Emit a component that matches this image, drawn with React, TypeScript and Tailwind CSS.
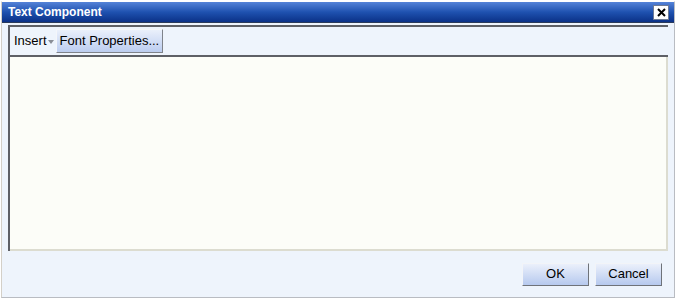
const App = () => {
  return (
    <div
      className="flex h-[299px] w-[676px] flex-col bg-white p-px"
      style={{ fontFamily: '"Liberation Sans", Arial, sans-serif' }}
    >
      <div className="flex flex-1 flex-col border border-[#b9bcc2] border-t-white border-l-[#d4d0c8]">
        {/* title bar */}
        <div className="flex h-[21px] items-center justify-between border-b border-[#2a3a5a] bg-gradient-to-b from-[#5583d8] via-[#1f52b0] to-[#0b3187] pl-[6px] pr-[5px]">
          <span className="text-[12px] font-bold text-white">Text Component</span>
          <button className="flex h-[15px] w-[16px] items-center justify-center border border-[#6d7a95] bg-white">
            <svg width="9" height="9" viewBox="0 0 9 9">
              <path d="M1 1L8 8M8 1L1 8" stroke="#000" strokeWidth="2" />
            </svg>
          </button>
        </div>

        {/* body */}
        <div className="flex flex-1 flex-col bg-[#eef4fc] px-[6px] pt-[2px]">
          <div className="flex flex-1 flex-col border-l-2 border-t-2 border-[#5e6066]">
            <div className="flex h-[30px] items-center gap-[2px] border-b-2 border-[#5e6066] bg-[#eef4fc] pl-[4px]">
              <span className="flex items-center text-[13px] text-black">
                Insert
                <svg width="6" height="4" viewBox="0 0 6 4" className="ml-[1px] mt-[1px]">
                  <path d="M0 0H6L3 4Z" fill="#8a8e96" />
                </svg>
              </span>
              <button className="h-[24px] border border-[#7f838a] border-t-[#f4f6fa] border-l-[#f4f6fa] bg-gradient-to-b from-[#eaf0fb] to-[#bccdf0] px-[3px] text-[13px] text-black">
                Font Properties...
              </button>
            </div>
            <div className="flex-1 border-b-2 border-r-2 border-[#dcdcd0] bg-[#fcfdf8]" />
          </div>

          <div className="flex h-[46px] items-center justify-end gap-[6px] pr-[6px]">
            <button className="h-[23px] w-[67px] border border-[#6f7379] border-t-[#f2f4f8] border-l-[#f2f4f8] bg-gradient-to-b from-[#ebf0fb] to-[#b6c9ee] text-[13px] text-black">
              OK
            </button>
            <button className="h-[23px] w-[67px] border border-[#6f7379] border-t-[#f2f4f8] border-l-[#f2f4f8] bg-gradient-to-b from-[#ebf0fb] to-[#b6c9ee] text-[13px] text-black">
              Cancel
            </button>
          </div>
        </div>
      </div>
    </div>
  );
};

export default App;
